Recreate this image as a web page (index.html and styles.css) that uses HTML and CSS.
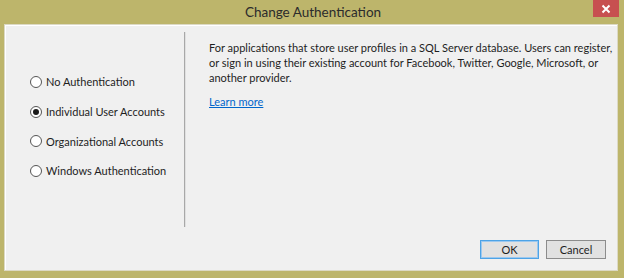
FILE: index.html
```html
<!DOCTYPE html>
<html>
<head>
<meta charset="utf-8">
<link rel="stylesheet" href="styles.css">
</head>
<body>
<div class="window">
  <div class="titlebar">
    <span></span>
    <span class="title">Change Authentication</span>
    <span class="close-wrap"><span class="close"><svg width="10" height="10" viewBox="0 0 10 10"><path d="M1.5 1.5 L8.5 8.5 M8.5 1.5 L1.5 8.5" stroke="#fff" stroke-width="2" fill="none"/></svg></span></span>
  </div>
  <div class="client">
    <div class="main">
      <div class="left">
        <div class="option"><span class="radio"></span><span>No Authentication</span></div>
        <div class="option"><span class="radio checked"></span><span>Individual User Accounts</span></div>
        <div class="option"><span class="radio"></span><span>Organizational Accounts</span></div>
        <div class="option"><span class="radio"></span><span>Windows Authentication</span></div>
      </div>
      <div class="divider"></div>
      <div class="right">
        <p class="desc">For applications that store user profiles in a SQL Server database. Users can register,<br>or sign in using their existing account for Facebook, Twitter, Google, Microsoft, or<br>another provider.</p>
        <a class="link" href="#">Learn more</a>
      </div>
    </div>
    <div class="buttons">
      <button class="btn default">OK</button>
      <button class="btn">Cancel</button>
    </div>
  </div>
</div>
</body>
</html>
```
FILE: styles.css
```css
* { box-sizing: border-box; }
html, body { margin: 0; padding: 0; }
body {
  width: 624px;
  height: 278px;
  background: #bdb56b;
  font-family: Lato, "Open Sans", sans-serif;
  font-size: 11px;
  color: #1e1e1e;
  overflow: hidden;
}
.window {
  width: 624px;
  height: 278px;
  display: flex;
  flex-direction: column;
}
.titlebar {
  height: 24px;
  display: grid;
  grid-template-columns: 1fr auto 1fr;
  align-items: start;
}
.title {
  font-size: 13.5px;
  color: #2b2b2b;
  line-height: 25px;
  padding-left: 2px;
}
.close-wrap {
  display: flex;
  justify-content: flex-end;
  padding-right: 5px;
}
.close {
  width: 26px;
  height: 17px;
  background: #c75050;
  display: flex;
  align-items: center;
  justify-content: center;
}
.client {
  margin: 0 6px 7px 4px;
  height: 247px;
  background: #f0f0f0;
  border: 1px solid #dcd9c4;
  box-shadow: inset 1px 1px 0 #ffffff;
  display: flex;
  flex-direction: column;
}
.main {
  margin-top: 7px;
  height: 195px;
  display: flex;
}
.left {
  width: 179px;
  flex: none;
  padding-top: 35px;
  padding-left: 25px;
  display: flex;
  flex-direction: column;
}
.option {
  height: 29.7px;
  display: flex;
  align-items: center;
  gap: 4px;
  white-space: nowrap;
}
.radio {
  width: 12px;
  height: 12px;
  border-radius: 50%;
  border: 1px solid #555;
  background: #fff;
  display: flex;
  align-items: center;
  justify-content: center;
  flex: none;
}
.radio.checked::after {
  content: "";
  width: 6px;
  height: 6px;
  border-radius: 50%;
  background: #1a1a1a;
}
.divider {
  width: 2px;
  flex: none;
  background: #a8a8a8;
  border-right: 1px solid #e0e0e0;
}
.right {
  padding: 8px 10px 0 23px;
  flex: 1;
  min-width: 0;
}
.desc {
  margin: 0 0 9px 0;
  line-height: 15px;
  white-space: nowrap;
}
.link {
  color: #0066cc;
  text-decoration: underline;
  line-height: 15px;
}
.buttons {
  margin-top: auto;
  padding: 0 11px 11px 0;
  display: flex;
  justify-content: flex-end;
  gap: 7px;
}
.btn {
  width: 59px;
  height: 19px;
  padding: 0;
  font-family: Lato, "Open Sans", sans-serif;
  font-size: 11px;
  color: #1e1e1e;
  background: #e1e1e1;
  border: 1px solid #adadad;
  line-height: 16px;
}
.btn.default {
  border-color: #4da3e6;
  box-shadow: inset 0 0 0 1px #9cc8ef;
}
.btn:not(.default) {
  width: 60px;
  border-color: #8c8c8c;
}
```
